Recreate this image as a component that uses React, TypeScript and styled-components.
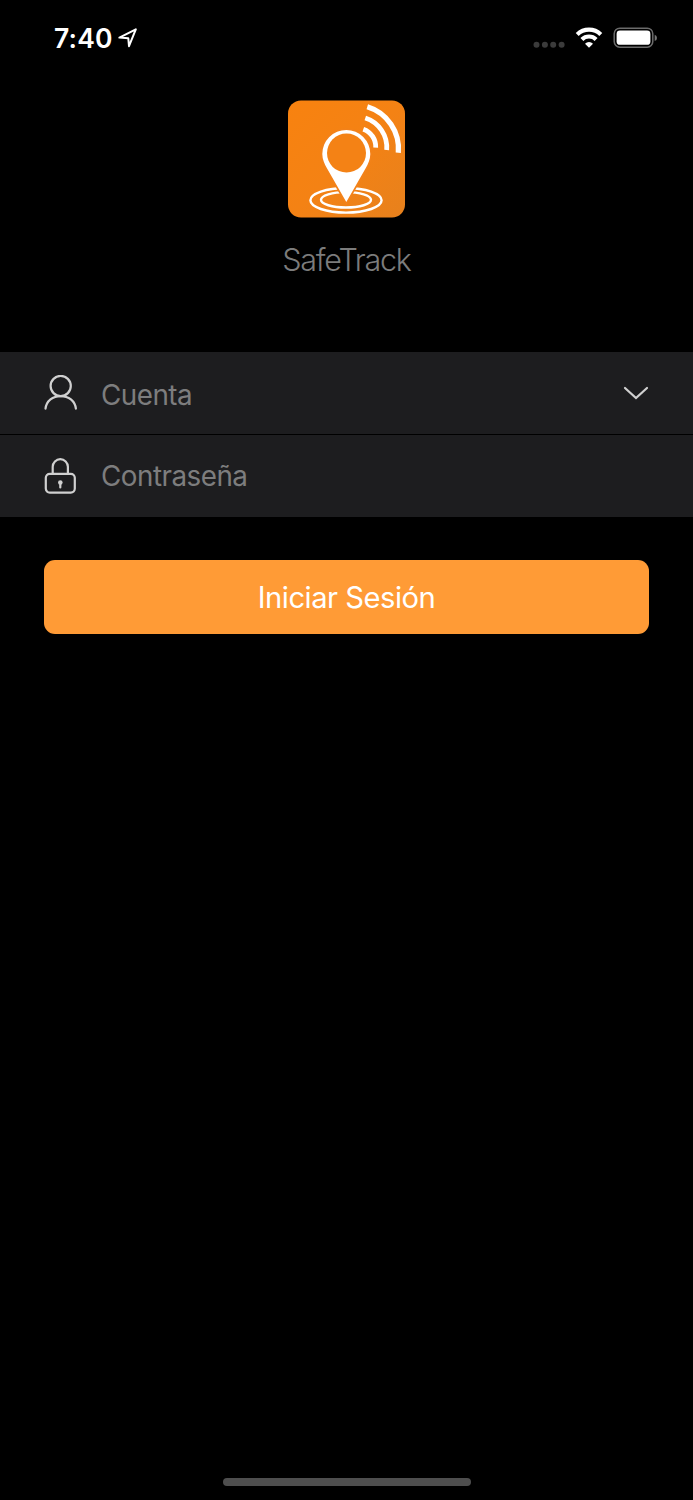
import React from "react";
import styled, { createGlobalStyle } from "styled-components";

const GlobalStyle = createGlobalStyle`
  body { margin: 0; background: #000; }
  * { box-sizing: border-box; }
  svg { display: block; flex: none; }
`;

const Screen = styled.main`
  display: flex;
  flex-direction: column;
  width: 693px;
  height: 1500px;
  background: #000;
  font-family: Inter, "Liberation Sans", sans-serif;
`;

const StatusBar = styled.header`
  display: flex;
  justify-content: space-between;
  height: 100px;
  padding: 24px 35px 0 54px;
`;

const StatusGroup = styled.div<{ $gap: number }>`
  display: flex;
  align-items: center;
  gap: ${(p) => p.$gap}px;
  height: 28px;
`;

const Clock = styled.span`
  width: 58px;
  font-size: 26.5px;
  font-weight: 560;
  line-height: 28px;
  letter-spacing: 0.2px;
  color: #fff;
  white-space: nowrap;
`;

const Brand = styled.section`
  display: flex;
  flex-direction: column;
  align-items: center;
  height: 251px;
`;

const AppName = styled.h1`
  margin: 22px 0 0;
  font-size: 30.5px;
  font-weight: 300;
  line-height: 40px;
  letter-spacing: -1.25px;
  color: #7c7c7c;
`;

const Fields = styled.div`
  display: flex;
  flex-direction: column;
  gap: 1px;
  padding-top: 0.5px;
`;

const Field = styled.label`
  display: flex;
  align-items: center;
  height: 82px;
  padding: 0 44px;
  background: #1d1d1f;
`;

const Input = styled.input<{ $drop: number }>`
  flex: 1;
  min-width: 0;
  height: 40px;
  margin: ${(p) => p.$drop}px 0 0 23px;
  padding: 0;
  border: 0;
  outline: 0;
  background: none;
  font: 380 27.8px/40px Inter, "Liberation Sans", sans-serif;
  letter-spacing: -0.5px;
  color: #fff;
  &::placeholder { color: #7d7d7e; opacity: 1; }
`;

const LoginButton = styled.button`
  height: 74px;
  margin: 43.5px 44px 0;
  padding: 1px 0 0;
  border: 0;
  border-radius: 11px;
  background: #ff9b36;
  font: 370 29.2px/73px Inter, "Liberation Sans", sans-serif;
  letter-spacing: -0.5px;
  color: #fff;
`;

const HomeIndicator = styled.div`
  width: 248px;
  height: 8px;
  margin: auto auto 14px;
  border-radius: 4px;
  background: #4e4e4e;
`;

const LocationIcon = () => (
  <svg width="20" height="20" viewBox="0 0 20 20" fill="none" stroke="#fff" strokeWidth="2" strokeLinejoin="round">
    <path d="M1.4 9.6 17.8 1.3 11 18.2 10.3 10.3Z" />
  </svg>
);

const SignalDots = () => (
  <svg width="32" height="28" viewBox="0 0 32 28" fill="#3b3b3b">
    <circle cx="3.5" cy="20.8" r="3" />
    <circle cx="11.9" cy="20.8" r="3" />
    <circle cx="20.2" cy="20.8" r="3" />
    <circle cx="28.6" cy="20.8" r="3" />
  </svg>
);

const WifiIcon = () => (
  <svg width="28" height="28" viewBox="0 0 28 28" fill="none" stroke="#fff" strokeWidth="4.2">
    <path d="M2.2 10.4A17 17 0 0 1 25.8 10.4" />
    <path d="M6.9 15.4A10.2 10.2 0 0 1 21.1 15.4" />
    <path d="M14 23.7 10 19.7A5.8 5.8 0 0 1 18 19.7Z" fill="#fff" stroke="none" />
  </svg>
);

const BatteryIcon = () => (
  <svg width="45" height="28" viewBox="0 0 45 28">
    <rect x="1.2" y="4.2" width="38.6" height="19" rx="5.6" fill="none" stroke="#6b6b6b" strokeWidth="1.5" />
    <rect x="3.6" y="6.6" width="33.8" height="14.2" rx="3.4" fill="#fff" />
    <path d="M41.7 10.7Q44 11.6 44 13.9T41.7 17.1Z" fill="#777" />
  </svg>
);

const Logo = () => (
  <svg width="117" height="118" viewBox="0 -.5 117 118">
    <defs>
      <linearGradient id="tile" x1="0" y1="0" x2="1" y2="1">
        <stop offset="0" stopColor="#f8820f" />
        <stop offset=".5" stopColor="#f48214" />
        <stop offset="1" stopColor="#e7811d" />
      </linearGradient>
    </defs>
    <rect width="117" height="117" rx="13" fill="url(#tile)" />
    <g fill="none" stroke="#fff" strokeWidth="2.4">
      <ellipse cx="58" cy="99.8" rx="35.6" ry="12.3" />
      <ellipse cx="58" cy="99.3" rx="25" ry="7.7" />
    </g>
    <path d="M34.3 53.5A24 24 0 1 1 82.3 53.5C82.3 59 80 63.5 77.8 67.5L58.3 101.5 38.8 67.5C36.6 63.5 34.3 59 34.3 53.5Z" fill="#fff" stroke="#f3821a" strokeWidth="3.4" paintOrder="stroke" />
    <circle cx="58.5" cy="52.6" r="19.5" fill="#f48215" />
    <g fill="none" stroke="#fff">
      <path d="M79.3 6.2A44 44 0 0 1 110.3 52.2" strokeWidth="5.2" />
      <path d="M77.3 17.5A31 31 0 0 1 98.7 49.5" strokeWidth="4.8" />
      <path d="M75.3 28.7A18.5 18.5 0 0 1 87.7 47.2" strokeWidth="4.8" />
    </g>
  </svg>
);

const UserIcon = () => (
  <svg width="34" height="36" viewBox="0 0 34 36" fill="none" stroke="#d0d0d0" strokeWidth="2.2" strokeLinecap="round">
    <circle cx="16.7" cy="11" r="10.1" />
    <path d="M1.5 33.7C2.4 25.9 8.8 21.1 16.7 21.1S31 25.9 31.9 33.7" />
  </svg>
);

const LockIcon = () => (
  <svg width="34" height="36" viewBox="0 0 34 36" fill="none" stroke="#d0d0d0" strokeWidth="2.2">
    <rect x="1.8" y="15.8" width="29" height="18.8" rx="4" />
    <path d="M8.7 15.8V8.8A7.6 7.6 0 0 1 23.9 8.8V15.8" />
    <circle cx="16.3" cy="24.5" r="2.3" fill="#d0d0d0" stroke="none" />
    <path d="M16.3 25V29.5" strokeLinecap="round" />
  </svg>
);

const ChevronIcon = () => (
  <svg width="26" height="14" viewBox="0 0 26 14" fill="none" stroke="#d0d0d0" strokeWidth="2.2" strokeLinecap="round">
    <path d="M2 2 13 12 24 2" />
  </svg>
);

export default function App() {
  return (
    <Screen>
      <GlobalStyle />
      <StatusBar>
        <StatusGroup $gap={6}>
          <Clock>7:40</Clock>
          <LocationIcon />
        </StatusGroup>
        <StatusGroup $gap={10}>
          <SignalDots />
          <WifiIcon />
          <BatteryIcon />
        </StatusGroup>
      </StatusBar>
      <Brand>
        <Logo />
        <AppName>SafeTrack</AppName>
      </Brand>
      <Fields>
        <Field>
          <UserIcon />
          <Input $drop={4} placeholder="Cuenta" />
          <ChevronIcon />
        </Field>
        <Field>
          <LockIcon />
          <Input $drop={1} type="password" placeholder="Contraseña" />
        </Field>
      </Fields>
      <LoginButton type="button">Iniciar Sesión</LoginButton>
      <HomeIndicator />
    </Screen>
  );
}
